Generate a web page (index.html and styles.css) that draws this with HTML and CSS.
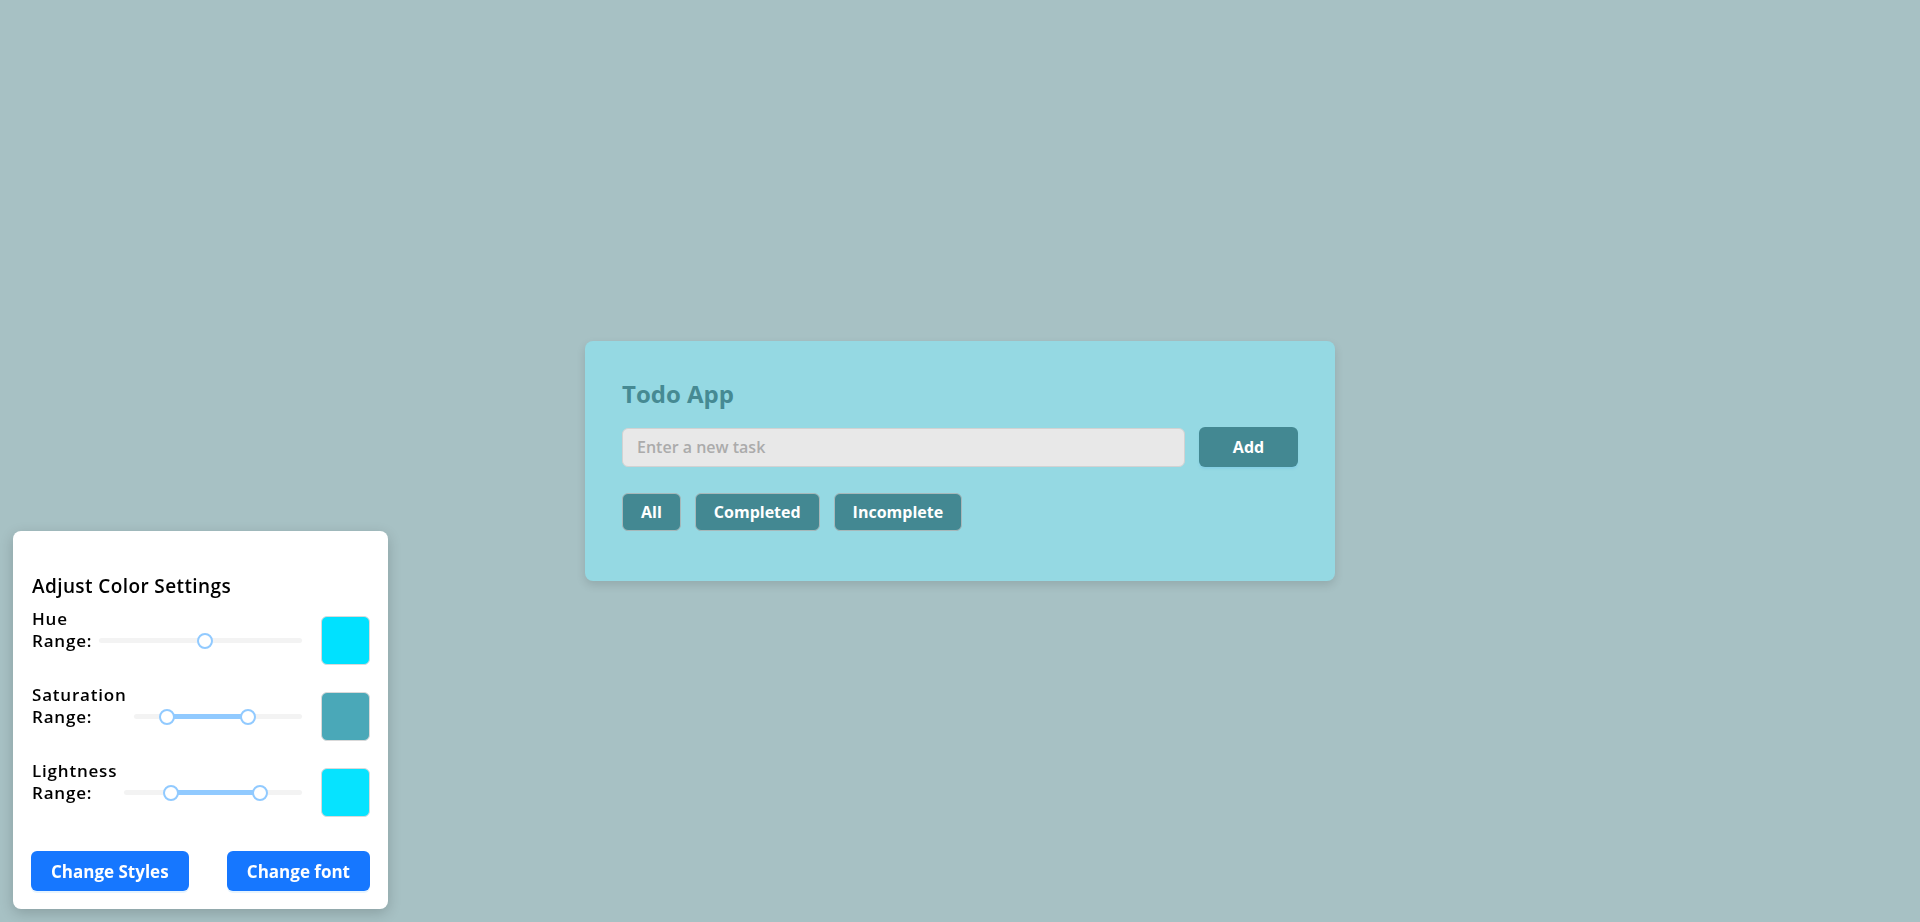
FILE: index.html
```html
<!DOCTYPE html>
<html lang="en">
<head>
<meta charset="utf-8">
<title>Todo App</title>
<link rel="stylesheet" href="styles.css">
</head>
<body>
<main class="stage">
  <section class="todo-card">
    <h2 class="todo-title">Todo App</h2>
    <div class="add-row">
      <input class="task-input" type="text" placeholder="Enter a new task">
      <button class="btn btn-add">Add</button>
    </div>
    <div class="filters">
      <button class="btn btn-filter">All</button>
      <button class="btn btn-filter">Completed</button>
      <button class="btn btn-filter">Incomplete</button>
    </div>
    <ul class="task-list"></ul>
  </section>
</main>

<aside class="color-panel">
  <h3 class="panel-title">Adjust Color Settings</h3>

  <div class="setting-row">
    <label class="setting-label">Hue Range:</label>
    <div class="slider">
      <div class="rail"></div>
      <div class="handle" style="left:52.3%"></div>
    </div>
    <div class="swatch swatch-hue"></div>
  </div>

  <div class="setting-row">
    <label class="setting-label">Saturation Range:</label>
    <div class="slider">
      <div class="rail"></div>
      <div class="track" style="left:19.8%;width:48.1%"></div>
      <div class="handle" style="left:19.8%"></div>
      <div class="handle" style="left:67.9%"></div>
    </div>
    <div class="swatch swatch-sat"></div>
  </div>

  <div class="setting-row">
    <label class="setting-label">Lightness Range:</label>
    <div class="slider">
      <div class="rail"></div>
      <div class="track" style="left:26.2%;width:50%"></div>
      <div class="handle" style="left:26.2%"></div>
      <div class="handle" style="left:76.2%"></div>
    </div>
    <div class="swatch swatch-light"></div>
  </div>

  <div class="panel-actions">
    <button class="btn-primary">Change Styles</button>
    <button class="btn-primary">Change font</button>
  </div>
</aside>
</body>
</html>
```

FILE: styles.css
```css
* { box-sizing: border-box; }

body {
  margin: 0;
  background: #a7c1c4;
  font-family: "Open Sans", "Liberation Sans", sans-serif;
}

.stage {
  min-height: 100vh;
  display: flex;
  align-items: center;
  justify-content: center;
}

.todo-card {
  width: 750px;
  padding: 36px 37px;
  background: #95d9e3;
  border-radius: 8px;
  box-shadow: 0 4px 10px rgba(0, 0, 0, 0.12);
}

.todo-title {
  margin: 0 0 17px;
  font-size: 24px;
  line-height: 33px;
  font-weight: 700;
  color: #468a93;
}

.add-row {
  display: flex;
  align-items: center;
  gap: 14px;
}

.task-input {
  flex: 1;
  min-width: 0;
  height: 39px;
  border: 1px solid #d2d2d2;
  border-radius: 6px;
  background: #e8e8e8;
  padding: 0 14px;
  font-family: "Open Sans", sans-serif;
  font-size: 16px;
  font-weight: 600;
  color: #333;
  outline: none;
}

.task-input::placeholder {
  color: #ababab;
}

.btn {
  font-family: "Open Sans", sans-serif;
  font-weight: 700;
  color: #ffffff;
  background: #438892;
  border-radius: 6px;
  cursor: pointer;
}

.btn-add {
  width: 99px;
  height: 40px;
  border: none;
  font-size: 16px;
  box-shadow: 0 2px 2px rgba(120, 200, 230, 0.5);
}

.filters {
  display: flex;
  gap: 14px;
  margin-top: 26px;
}

.btn-filter {
  height: 38px;
  padding: 0 18px;
  border: 1px solid #a7b8ba;
  font-size: 16px;
}

.task-list {
  margin: 0;
  padding: 0;
  height: 14px;
  list-style: none;
}

/* Color settings panel */
.color-panel {
  position: fixed;
  left: 13px;
  bottom: 13px;
  width: 375px;
  padding: 42px 18px 18px;
  background: #ffffff;
  border-radius: 8px;
  box-shadow: 0 4px 14px rgba(0, 0, 0, 0.18);
}

.panel-title {
  margin: 0 0 17px 1px;
  font-size: 19px;
  line-height: 26px;
  font-weight: 600;
  letter-spacing: 0.4px;
  color: #000000;
}

.setting-row {
  display: flex;
  align-items: center;
  height: 49px;
  margin-bottom: 27px;
}

.setting-row:last-of-type {
  margin-bottom: 0;
}

.setting-label {
  align-self: flex-start;
  width: min-content;
  margin: -8px 0 0 1px;
  font-size: 17px;
  line-height: 22px;
  font-weight: 600;
  letter-spacing: 0.8px;
  color: #000000;
  flex-shrink: 0;
}

.slider {
  flex: 1;
  position: relative;
  height: 16px;
  margin: 0 19px 0 7px;
}

.rail {
  position: absolute;
  left: 0;
  right: 0;
  top: 5.5px;
  height: 5px;
  border-radius: 3px;
  background: #f3f3f3;
}

.track {
  position: absolute;
  top: 5.5px;
  height: 5px;
  border-radius: 3px;
  background: #91caff;
}

.handle {
  position: absolute;
  top: 0;
  width: 16px;
  height: 16px;
  margin-left: -8px;
  border: 2.5px solid #91caff;
  border-radius: 50%;
  background: #ffffff;
}

.swatch {
  width: 49px;
  height: 49px;
  flex-shrink: 0;
  border: 1px solid #d9d9d9;
  border-radius: 6px;
}

.swatch-hue { background: #00e1ff; }
.swatch-sat { background: #4aa8b8; }
.swatch-light { background: #06e3ff; }

.panel-actions {
  display: flex;
  justify-content: space-between;
  margin-top: 34px;
}

.btn-primary {
  height: 40px;
  padding: 0 20px;
  border: none;
  border-radius: 6px;
  background: #1677ff;
  color: #ffffff;
  font-family: "Open Sans", sans-serif;
  font-size: 17px;
  font-weight: 700;
  box-shadow: 0 2px 0 rgba(5, 145, 255, 0.1);
  cursor: pointer;
}
```
